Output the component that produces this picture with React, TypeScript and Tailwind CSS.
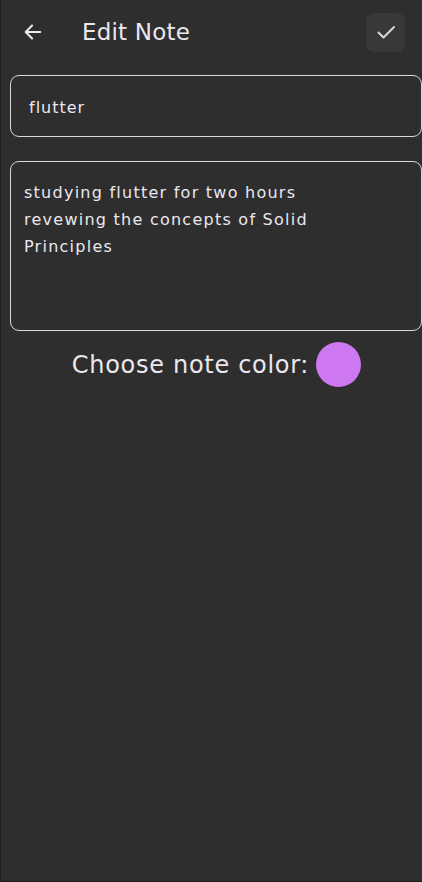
import { useState } from "react"

function BackArrow() {
    return (
        <svg width="22" height="22" viewBox="0 0 24 24" fill="none" stroke="#ece8ee" strokeWidth="2.2" strokeLinecap="round" strokeLinejoin="round">
            <path d="M20 12H4.5" />
            <path d="M11 5l-7 7 7 7" />
        </svg>
    )
}

function CheckIcon() {
    return (
        <svg width="24" height="24" viewBox="0 0 24 24" fill="none" stroke="#d8d6da" strokeWidth="2" strokeLinecap="round" strokeLinejoin="round">
            <path d="M4.5 12.5l5 5L20 7" />
        </svg>
    )
}

export default function App() {
    const [title, setTitle] = useState("flutter")
    const [body, setBody] = useState("studying flutter for two hours\nrevewing the concepts of Solid\nPrinciples")

    return (
        <div
            className="h-[882px] w-[422px] bg-[#2e2e2e] border-l border-b border-[#1f1f1f] flex flex-col text-[#ebe7ee]"
            style={{ fontFamily: '"DejaVu Sans", sans-serif' }}
        >
            {/* header */}
            <div className="flex items-center h-[64px] pl-[21px] pr-[17px]">
                <button className="w-[22px] h-[22px] flex items-center justify-center">
                    <BackArrow />
                </button>
                <h1 className="ml-[38px] text-[23px] tracking-[0.2px] flex-1">Edit Note</h1>
                <button className="w-[39px] h-[39px] rounded-[8px] bg-[#383838] flex items-center justify-center">
                    <CheckIcon />
                </button>
            </div>

            {/* fields */}
            <div className="flex flex-col gap-[24px] pl-[9px] mt-[11px]">
                <input
                    value={title}
                    onChange={(e) => setTitle(e.target.value)}
                    className="h-[62px] w-full rounded-[9px] border border-[#d9d6dc] bg-transparent px-[18px] pt-[2px] text-[16px] tracking-[1px] text-[#ebe7ee] outline-none"
                    style={{ fontFamily: '"DejaVu Sans", sans-serif' }}
                />
                <textarea
                    value={body}
                    onChange={(e) => setBody(e.target.value)}
                    className="h-[170px] w-full rounded-[9px] border border-[#d9d6dc] bg-transparent px-[13px] pt-[17px] text-[16px] leading-[27px] tracking-[1.25px] text-[#ebe7ee] outline-none resize-none"
                    style={{ fontFamily: '"DejaVu Sans", sans-serif' }}
                />
            </div>

            {/* color picker */}
            <div className="flex items-center justify-center gap-[7px] mt-[11px] pl-[10px]">
                <span className="text-[24px] tracking-[0.7px]">Choose note color:</span>
                <button className="w-[45px] h-[45px] rounded-full bg-[#cd78f1]" />
            </div>
        </div>
    )
}
